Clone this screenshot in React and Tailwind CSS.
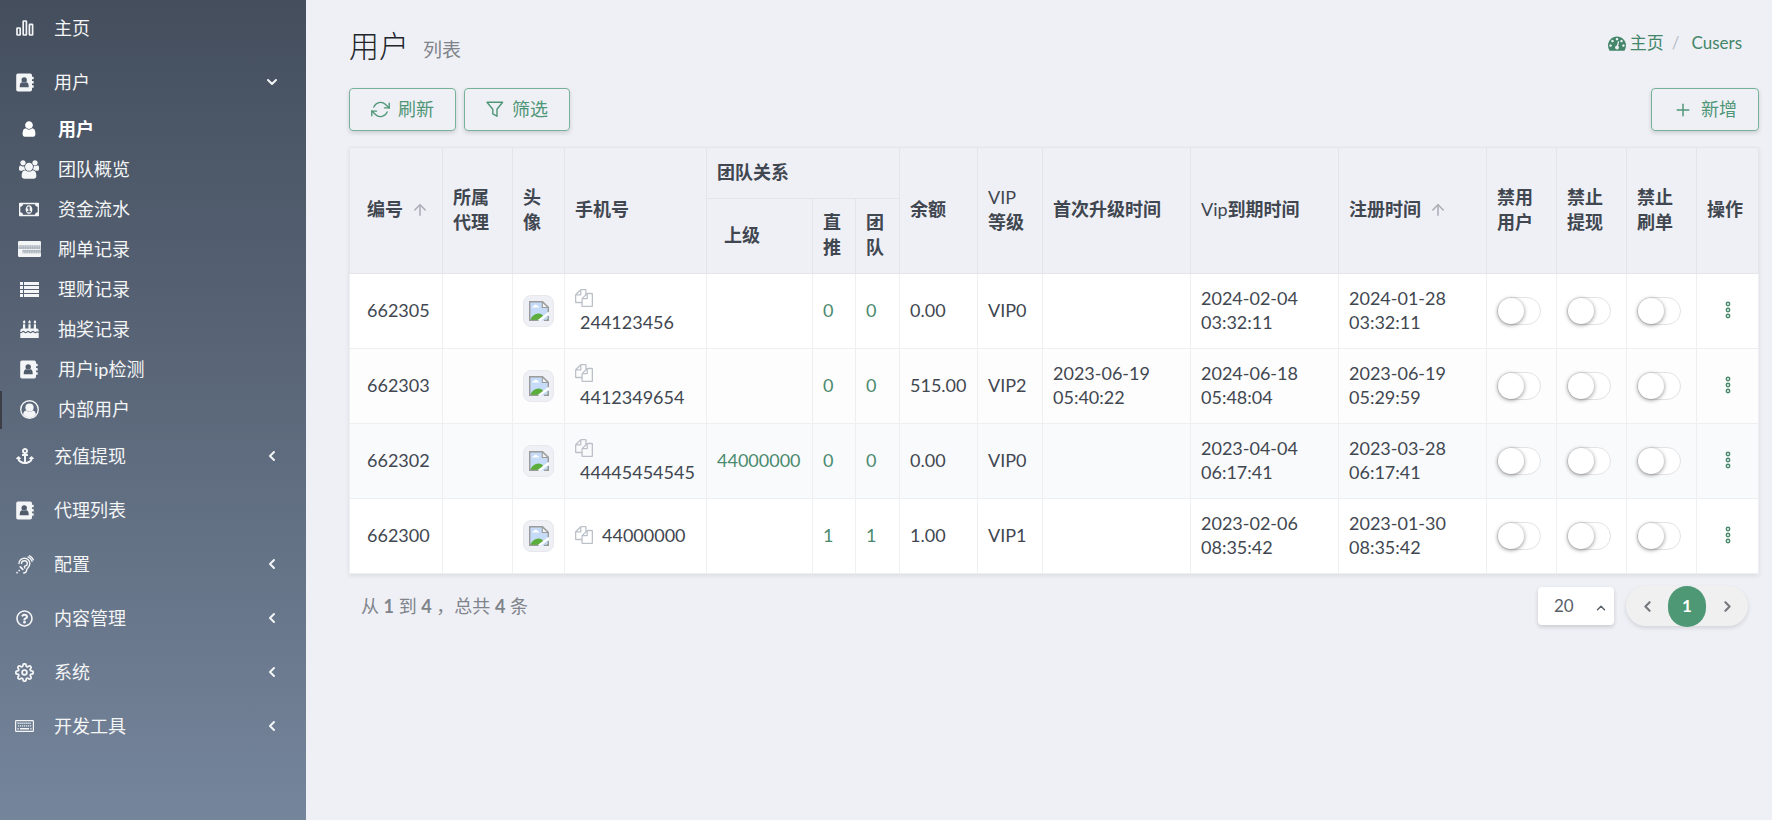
import { FaAnchor, FaRegQuestionCircle } from "react-icons/fa";
import {
  FiArrowUp,
  FiChevronDown,
  FiChevronLeft,
  FiChevronRight,
  FiChevronUp,
  FiPlus,
  FiRefreshCw,
  FiSettings,
} from "react-icons/fi";

const BarsIcon = () => (
  <svg viewBox="0 0 18 16" className="h-4 w-[18px]" fill="none" stroke="currentColor" strokeWidth="1.7" aria-hidden="true">
    <rect x="1" y="8" width="3.2" height="7" rx="0.6" />
    <rect x="7.2" y="1" width="3.2" height="14" rx="0.6" />
    <rect x="13.4" y="4.4" width="3.2" height="10.6" rx="0.6" />
  </svg>
);

const AddressBookIcon = () => (
  <svg viewBox="0 0 18 19" className="h-[19px] w-[18px]" aria-hidden="true">
    <path
      d="M2 0.500h12.200a1.800 1.800 0 0 1 1.800 1.800v1.500h1.200q.5 0 .5.5v1.500q0 .5-.5.5H16v1.700h1.200q.5 0 .5.5v1.500q0 .5-.5.5H16v1.700h1.200q.5 0 .5.5v1.500q0 .5-.5.5H16v2a1.800 1.800 0 0 1-1.800 1.800H2a1.800 1.800 0 0 1-1.800-1.800V2.300A1.800 1.800 0 0 1 2 0.500z"
      fill="currentColor"
    />
    <circle cx="8.200" cy="7" r="2.700" fill="#505c6c" />
    <path d="M4 14.300q-.3 0-.3-.6 0-4.200 2.500-4.400 2 1.500 4 0 2.500.2 2.500 4.400 0 .6-.4.6z" fill="#505c6c" />
  </svg>
);

const UserIcon = () => (
  <svg viewBox="0 0 1792 1792" className="size-[18px]" fill="currentColor" aria-hidden="true">
    <path d="M1536 1399q0 109-62.5 187t-150.5 78h-854q-88 0-150.5-78t-62.5-187q0-85 8.5-160.5t31.5-152 58.5-131 94-89 134.5-34.5q131 128 313 128t313-128q76 0 134.5 34.5t94 89 58.5 131 31.5 152 8.5 160.5zm-256-887q0 159-112.5 271.5t-271.5 112.5-271.5-112.5-112.5-271.5 112.5-271.5 271.5-112.5 271.5 112.5 112.5 271.5z" />
  </svg>
);

const UsersIcon = () => (
  <svg viewBox="0 0 1920 1792" className="h-[19px] w-5" fill="currentColor" aria-hidden="true">
    <path d="M593 896q-162 5-265 128h-134q-82 0-138-40.5t-56-118.5q0-353 124-353 6 0 43.5 21t97.5 42.5 119 21.5q67 0 133-23-5 37-5 66 0 159 92 289zm1071 637q0 120-73 189.5t-194 69.5h-874q-121 0-194-69.5t-73-189.5q0-53 3.5-103.5t14-109 26.5-108.5 43-97.5 62-81 85.5-53.5 111.5-20q10 0 43 21.5t73 48 107 48 135 21.5 135-21.5 107-48 73-48 43-21.5q61 0 111.5 20t85.5 53.5 62 81 43 97.5 26.5 108.5 14 109 3.5 103.5zm-1024-1277q0 106-75 181t-181 75-181-75-75-181 75-181 181-75 181 75 75 181zm704 384q0 159-112.5 271.5t-271.5 112.5-271.5-112.5-112.5-271.5 112.5-271.5 271.5-112.5 271.5 112.5 112.5 271.5zm576 225q0 78-56 118.5t-138 40.5h-134q-103-123-265-128 92-130 92-289 0-29-5-66 66 23 133 23 59 0 119-21.5t97.5-42.5 43.5-21q124 0 124 353zm-128-609q0 106-75 181t-181 75-181-75-75-181 75-181 181-75 181 75 75 181z" />
  </svg>
);

const MoneyIcon = () => (
  <svg viewBox="0 0 1920 1792" className="h-[19px] w-5" fill="currentColor" aria-hidden="true">
    <path d="M768 1152h384v-96h-128v-448h-114l-148 137 77 80q42-37 55-57h2v288h-128v96zm512-256q0 70-21 142t-59.5 134-101.5 101-138 39-138-39-101.5-101-59.5-134-21-142 21-142 59.5-134 101.5-101 138-39 138 39 101.5 101 59.5 134 21 142zm512 256v-512q-106 0-181-75t-75-181h-1152q0 106-75 181t-181 75v512q106 0 181 75t75 181h1152q0-106 75-181t181-75zm128-832v1152q0 26-19 45t-45 19h-1792q-26 0-45-19t-19-45v-1152q0-26 19-45t45-19h1792q26 0 45 19t19 45z" />
  </svg>
);

const CardIcon = () => (
  <svg viewBox="0 0 23 16" className="h-4 w-[23px]" aria-hidden="true">
    <rect width="23" height="16" rx="1.2" fill="currentColor" />
    <path d="M0.500 6.200h22" stroke="#a9b1bb" strokeWidth="3.600" />
    <path d="M4.500 10.600h18.500" stroke="#a9b1bb" strokeWidth="3.400" />
    <path d="M1 5.500h21.500M1.500 7h21" stroke="#e4e7ea" strokeWidth="0.700" strokeDasharray="1.300 1" />
    <path d="M5.500 10h17M5 11.500h17.500" stroke="#e4e7ea" strokeWidth="0.700" strokeDasharray="1.300 1" />
  </svg>
);

const ListIcon = () => (
  <svg viewBox="0 0 19 15" className="h-[15px] w-[19px]" fill="currentColor" aria-hidden="true">
    <path d="M0 0h3v3H0zM4 0h15v3H4zM0 4h3v3H0zM4 4h15v3H4zM0 8h3v3H0zM4 8h15v3H4zM0 12h3v3H0zM4 12h15v3H4z" />
  </svg>
);

const CakeIcon = () => (
  <svg viewBox="0 0 19 18" className="h-[18px] w-[19px]" aria-hidden="true">
    <path d="M3 4.200h2.200V9H3zM8.400 4.200h2.200V9H8.400zM13.800 4.200H16V9h-2.200z" fill="currentColor" />
    <path d="M4.200 0q1.200 1.400 1.200 2.300a1.200 1.200 0 0 1-2.500 0Q2.900 1.500 4.200 0zM9.600 0q1.200 1.400 1.200 2.300a1.200 1.200 0 0 1-2.500 0Q8.300 1.500 9.600 0zM15 0q1.200 1.400 1.200 2.300a1.200 1.200 0 0 1-2.500 0Q13.700 1.500 15 0z" fill="currentColor" />
    <path d="M0.300 18V10.500A2 2 0 0 1 2.300 8.600h14.400a2 2 0 0 1 2 1.900V18z" fill="currentColor" />
    <path d="M0 12.600q1.600 0 2.400-.8.900-.7 1.800 0 1.400 1.600 3 0 .9-.7 1.800 0 1.400 1.600 3 0 .9-.7 1.800 0 1.400 1.600 3 .2.900-.6 2.200.6" fill="none" stroke="#596677" strokeWidth="1.200" />
  </svg>
);

const UserCircleIcon = () => (
  <svg viewBox="0 0 18 18" className="size-[19px]" aria-hidden="true">
    <circle cx="9" cy="9" r="8.3" fill="none" stroke="currentColor" strokeWidth="1.3" />
    <circle cx="9" cy="7.2" r="3.9" fill="currentColor" />
    <path d="M2.9 13.6C3.3 11.4 4.4 10 6 9.9c1.8 1.6 4.2 1.6 6 0 1.6.1 2.7 1.5 3.1 3.700A8 8 0 0 1 9 17a8 8 0 0 1-6.100-3.400z" fill="currentColor" />
  </svg>
);

const ListeningIcon = () => (
  <svg viewBox="0 0 18 19" className="h-[19px] w-[18px]" fill="none" stroke="currentColor" strokeWidth="1.400" strokeLinecap="round" aria-hidden="true">
    <path d="M3 8.600a5.400 5.400 0 0 1 10.800 0c0 4.200-3 3.900-3.200 6.700-.1 1.800-1.200 2.700-2.900 2.700" />
    <path d="M5.500 8.600a2.900 2.900 0 0 1 5.800.2c0 1-.5 1.700-1.500 1.900-1.500.3-1.600 1.300-1 2.300" />
    <path d="M12 1.900a7.200 7.200 0 0 1 4.100 4.400" />
    <path d="M13.600 0.800a8 8 0 0 1 3.700 4" />
    <path d="M1 17.600h.1M3.100 15.500h.1M4.300 11.800l2.500 2.500" strokeWidth="1.700" />
  </svg>
);

const KeyboardIcon = () => (
  <svg viewBox="0 0 19 12" className="h-3 w-[19px]" fill="none" stroke="currentColor" aria-hidden="true">
    <rect x="0.600" y="0.600" width="17.800" height="10.800" rx="0.600" strokeWidth="1.200" />
    <path d="M2.500 3.200h14M3 5.900h13.500" strokeWidth="1.400" strokeDasharray="1.200 0.800" />
    <path d="M2.500 8.700h1.200M5 8.700h9M15.300 8.700h1.200" strokeWidth="1.400" />
  </svg>
);

const DashboardIcon = () => (
  <svg viewBox="0 0 1792 1792" className="size-[18px]" fill="currentColor" aria-hidden="true">
    <path d="M384 1152q0-53-37.5-90.5t-90.5-37.5-90.5 37.5-37.5 90.5 37.5 90.5 90.5 37.5 90.5-37.5 37.5-90.5zm192-448q0-53-37.5-90.5t-90.5-37.5-90.5 37.5-37.5 90.5 37.5 90.5 90.5 37.5 90.5-37.5 37.5-90.5zm428 481l101-382q6-26-7.5-48.5t-38.5-29.5-48 6.5-30 39.5l-101 382q-60 5-107 43.5t-63 98.5q-20 77 20 146t117 89 146-20 89-117q16-60-6-117t-72-91zm660-33q0-53-37.5-90.5t-90.5-37.5-90.5 37.5-37.5 90.5 37.5 90.5 90.5 37.5 90.5-37.5 37.5-90.5zm-640-640q0-53-37.5-90.5t-90.5-37.5-90.5 37.5-37.5 90.5 37.5 90.5 90.5 37.5 90.5-37.5 37.5-90.5zm448 192q0-53-37.5-90.5t-90.5-37.5-90.5 37.5-37.5 90.5 37.5 90.5 90.5 37.5 90.5-37.5 37.5-90.5zm320 448q0 261-141 483-19 29-54 29h-1402q-35 0-54-29-141-221-141-483 0-182 71-348t191-286 286-191 348-71 348 71 286 191 191 286 71 348z" />
  </svg>
);

const FunnelIcon = () => (
  <svg viewBox="0 0 18 17" className="h-[17px] w-[18px]" fill="none" stroke="currentColor" strokeWidth="1.400" strokeLinejoin="round" aria-hidden="true">
    <path d="M1 1.200h15.600L11 8.300v6.900l-4.200-2.300V8.300z" />
  </svg>
);

const CopyIcon = () => (
  <svg viewBox="0 0 1792 1792" className="size-[18px]" fill="currentColor" aria-hidden="true">
    <path d="M1696 384q40 0 68 28t28 68v1216q0 40-28 68t-68 28h-960q-40 0-68-28t-28-68v-288h-544q-40 0-68-28t-28-68v-672q0-40 20-88t48-76l408-408q28-28 76-48t88-20h416q40 0 68 28t28 68v328q68-40 128-40h416zm-544 213l-299 299h299v-299zm-640-384l-299 299h299v-299zm196 647l316-316v-416h-384v416q0 40-28 68t-68 28h-416v640h512v-256q0-40 20-88t48-76zm956 804v-1152h-384v416q0 40-28 68t-68 28h-416v640h896z" />
  </svg>
);

const MoreIcon = () => (
  <svg viewBox="0 0 6 18" className="h-[18px] w-[6px]" fill="none" stroke="currentColor" strokeWidth="1.500" aria-hidden="true">
    <circle cx="3" cy="3" r="1.700" />
    <circle cx="3" cy="9" r="1.700" />
    <circle cx="3" cy="15" r="1.700" />
  </svg>
);

const BrokenImage = () => (
  <svg viewBox="0 0 20 20" className="size-5" role="img" aria-label="头像">
    <path d="M0.500 0.500h13l6 5.500v13.500H0.500z" fill="#c5dbf7" />
    <path d="M3 6.500q0-1.500 1.800-1.500.6-1.600 2.300-1.300 1.500.2 1.600 1.600 1.500 0 1.500 1.200z" fill="#fff" />
    <path d="M1 19q3-6.500 8.500-6.500 3.500 0 5 3L11 19z" fill="#5bad3c" />
    <path d="M17.500 19l1.500-1.200V19z" fill="#5bad3c" />
    <path d="M12 19.600l8-6v-3l-12 9z" fill="#fff" />
    <path d="M9.500 19.500H0.700V0.700h12.800l5.800 5.600v5M19.300 15v4.500h-4.300" fill="none" stroke="#9b9b9b" strokeWidth="1.4" />
    <path d="M13.300 0.800v5.700h5.900z" fill="#f4f4f4" stroke="#9b9b9b" strokeWidth="1.100" />
  </svg>
);

const SUB_ITEMS = [
  { label: "用户", icon: <UserIcon />, active: true },
  { label: "团队概览", icon: <UsersIcon /> },
  { label: "资金流水", icon: <MoneyIcon /> },
  { label: "刷单记录", icon: <CardIcon /> },
  { label: "理财记录", icon: <ListIcon /> },
  { label: "抽奖记录", icon: <CakeIcon /> },
  { label: "用户ip检测", icon: <AddressBookIcon /> },
  { label: "内部用户", icon: <UserCircleIcon />, marked: true },
];

const MENU = [
  { label: "主页", icon: <BarsIcon /> },
  { label: "用户", icon: <AddressBookIcon />, children: SUB_ITEMS },
  { label: "充值提现", icon: <FaAnchor size={18} />, more: true },
  { label: "代理列表", icon: <AddressBookIcon /> },
  { label: "配置", icon: <ListeningIcon />, more: true },
  { label: "内容管理", icon: <FaRegQuestionCircle size={17} />, more: true },
  { label: "系统", icon: <FiSettings size={19} strokeWidth={2.25} />, more: true },
  { label: "开发工具", icon: <KeyboardIcon />, more: true },
];

const ROWS = [
  { id: "662305", phone: "244123456", parent: "", direct: "0", team: "0", balance: "0.00", vip: "VIP0", first: "", expire: "2024-02-04 03:32:11", joined: "2024-01-28 03:32:11", bg: "bg-white" },
  { id: "662303", phone: "4412349654", parent: "", direct: "0", team: "0", balance: "515.00", vip: "VIP2", first: "2023-06-19 05:40:22", expire: "2024-06-18 05:48:04", joined: "2023-06-19 05:29:59", bg: "bg-[#fdfdfd]" },
  { id: "662302", phone: "44445454545", parent: "44000000", direct: "0", team: "0", balance: "0.00", vip: "VIP0", first: "", expire: "2023-04-04 06:17:41", joined: "2023-03-28 06:17:41", bg: "bg-[#f9fafc]" },
  { id: "662300", phone: "44000000", parent: "", direct: "1", team: "1", balance: "1.00", vip: "VIP1", first: "", expire: "2023-02-06 08:35:42", joined: "2023-01-30 08:35:42", bg: "bg-white" },
];

const TOGGLES = ["禁用用户", "禁止提现", "禁止刷单"];

const TH = "border border-[#e4e5e9] px-[10px] pb-[2px] text-left font-bold leading-[25px]";
const TH_INDENTED = "border border-[#e4e5e9] pl-[17px] pb-[2px] text-left font-bold leading-[25px]";
const TD = "border border-[#eeeff1] px-[10px] pb-[2px] leading-6";
const TD_CENTERED = "border border-[#eeeff1] px-[10px] leading-6";
const OUTLINE_BUTTON =
  "flex h-[43px] items-center gap-2 rounded border border-[#78b098] px-[21px] text-[#4f9677] shadow-[0_2px_4px_rgba(0,0,0,0.14)]";

function Sidebar() {
  return (
    <nav aria-label="主菜单" className="w-[306px] shrink-0 bg-linear-to-b from-[#444e5d] to-[#75859b] pt-px text-[18px] text-[#f4f5f6]">
      <ul>
        {MENU.map((item) => (
          <li key={item.label}>
            <a href="#" className="flex h-[54px] items-center pr-[26px]">
              <span className="flex w-[49px] justify-center">{item.icon}</span>
              <span className="flex-1 pl-[5px]">{item.label}</span>
              {item.children && <FiChevronDown size={16} strokeWidth={3} />}
              {item.more && <FiChevronLeft size={16} strokeWidth={3} />}
            </a>
            {item.children && (
              <ul>
                {item.children.map((sub) => (
                  <li key={sub.label} className="relative">
                    {sub.marked && <span className="absolute top-[2px] left-0 h-[38px] w-[2px] bg-[#3b3f45]" />}
                    <a href="#" className={sub.active ? "flex h-10 items-center font-bold text-white" : "flex h-10 items-center"}>
                      <span className="flex w-[58px] justify-center">{sub.icon}</span>
                      <span>{sub.label}</span>
                    </a>
                  </li>
                ))}
              </ul>
            )}
          </li>
        ))}
      </ul>
    </nav>
  );
}

function Toggle({ label }) {
  return (
    <input
      type="checkbox"
      role="switch"
      aria-label={label}
      className="block h-7 w-11 appearance-none rounded-full border border-[#e3e3e5] bg-white before:block before:size-[26px] before:rounded-full before:bg-white before:shadow-[0_1px_4px_rgba(0,0,0,0.45)] checked:bg-[#4e9876] checked:before:translate-x-4"
    />
  );
}

function UserTable() {
  return (
    <table className="w-full table-fixed border-collapse text-[18px] text-[#414750] shadow-[0_2px_5px_rgba(0,0,0,0.08)]">
      <colgroup>
        <col className="w-[93px]" />
        <col className="w-[70px]" />
        <col className="w-[52px]" />
        <col className="w-[142px]" />
        <col className="w-[106px]" />
        <col className="w-[43px]" />
        <col className="w-[44px]" />
        <col className="w-[78px]" />
        <col className="w-[65px]" />
        <col className="w-[148px]" />
        <col className="w-[148px]" />
        <col className="w-[148px]" />
        <col className="w-[70px]" />
        <col className="w-[70px]" />
        <col className="w-[70px]" />
        <col />
      </colgroup>
      <thead>
        <tr className="h-[51px]">
          <th rowSpan={2} className={TH_INDENTED}>
            <span className="flex items-center gap-2">
              编号
              <FiArrowUp size={18} className="text-[#a9adb4]" />
            </span>
          </th>
          <th rowSpan={2} className={TH}>所属<br />代理</th>
          <th rowSpan={2} className={TH}>头<br />像</th>
          <th rowSpan={2} className={TH}>手机号</th>
          <th colSpan={3} className={TH}>团队关系</th>
          <th rowSpan={2} className={TH}>余额</th>
          <th rowSpan={2} className={TH}><span className="font-normal">VIP</span><br />等级</th>
          <th rowSpan={2} className={TH}>首次升级时间</th>
          <th rowSpan={2} className={TH}><span className="font-normal">Vip</span>到期时间</th>
          <th rowSpan={2} className={TH}>
            <span className="flex items-center gap-2">
              注册时间
              <FiArrowUp size={18} className="text-[#a9adb4]" />
            </span>
          </th>
          <th rowSpan={2} className={TH}>禁用<br />用户</th>
          <th rowSpan={2} className={TH}>禁止<br />提现</th>
          <th rowSpan={2} className={TH}>禁止<br />刷单</th>
          <th rowSpan={2} className={TH}>操作</th>
        </tr>
        <tr className="h-[75px]">
          <th className={TH_INDENTED}>上级</th>
          <th className={TH}>直<br />推</th>
          <th className={TH}>团<br />队</th>
        </tr>
      </thead>
      <tbody>
        {ROWS.map((row) => (
          <tr key={row.id} className={`h-[75px] ${row.bg}`}>
            <td className="border border-[#eeeff1] pb-[2px] pl-[17px]">{row.id}</td>
            <td className={TD} />
            <td className={TD_CENTERED}>
              <span className="flex h-8 w-[31px] items-center justify-center rounded-lg border border-[#e6e8ec] bg-[#eff0f6]">
                <BrokenImage />
              </span>
            </td>
            <td className={TD}>
              <span className="flex flex-wrap items-center">
                <button type="button" aria-label="复制" className="mr-1 flex h-6 items-center text-[#bcc1c9]"><CopyIcon /></button>
                <span className="pr-1 pl-[5px]">{row.phone}</span>
              </span>
            </td>
            <td className={TD}>{row.parent && <a href="#" className="text-[#4a8a6e]">{row.parent}</a>}</td>
            <td className={TD}><a href="#" className="text-[#4a8a6e]">{row.direct}</a></td>
            <td className={TD}><a href="#" className="text-[#4a8a6e]">{row.team}</a></td>
            <td className={TD}>{row.balance}</td>
            <td className={TD}>{row.vip}</td>
            <td className={TD}><span className="block w-[110px]">{row.first}</span></td>
            <td className={TD}><span className="block w-[110px]">{row.expire}</span></td>
            <td className={TD}><span className="block w-[110px]">{row.joined}</span></td>
            {TOGGLES.map((label) => (
              <td key={label} className={TD_CENTERED}><Toggle label={`${label} ${row.id}`} /></td>
            ))}
            <td className={TD}>
              <button type="button" aria-label="操作" className="flex w-full justify-center text-[#4a8a6e]">
                <MoreIcon />
              </button>
            </td>
          </tr>
        ))}
      </tbody>
    </table>
  );
}

export default function App() {
  return (
    <div className="flex min-h-screen bg-[#eff0f6] font-['Lato','Noto_Sans_CJK_SC',sans-serif]">
      <Sidebar />
      <main className="min-w-0 flex-1 pr-[13px] pl-[43px]">
        <header className="flex h-[88px] items-start justify-between pr-[17px]">
          <h1 className="flex items-baseline gap-[14px] pt-6 text-[30px] leading-[43px] font-light text-[#22262b]">
            用户
            <small className="text-[19px] font-normal text-[#7f838a]">列表</small>
          </h1>
          <nav aria-label="面包屑" className="flex items-center pt-[30px] text-[17px] leading-[26px] text-[#438669]">
            <a href="#" className="flex items-center gap-1"><DashboardIcon />主页</a>
            <span className="px-2 text-[#b8bec8]">/</span>
            <a href="#" className="pl-1">Cusers</a>
          </nav>
        </header>
        <div className="flex h-[59px] items-start gap-2 text-[18px]">
          <button type="button" className={OUTLINE_BUTTON}><FiRefreshCw size={19} strokeWidth={1.75} />刷新</button>
          <button type="button" className={OUTLINE_BUTTON}><FunnelIcon />筛选</button>
          <button type="button" className={`${OUTLINE_BUTTON} ml-auto`}><FiPlus size={20} strokeWidth={1.75} />新增</button>
        </div>
        <UserTable />
        <footer className="flex items-center justify-between pt-3 pr-[11px] pl-3">
          <p className="text-[18px] text-[#7f848b]">
            从 <b className="font-bold">1</b> 到 <b className="font-bold">4</b> ，总共 <b className="font-bold">4</b> 条
          </p>
          <div className="flex items-center gap-3">
            <div className="relative text-[#5a6068]">
              <select aria-label="每页条数" defaultValue="20" className="h-[38px] w-[76px] appearance-none rounded bg-white pl-4 text-[17px] shadow-[0_2px_4px_rgba(0,0,0,0.16)]">
                <option>20</option>
              </select>
              <FiChevronUp size={14} strokeWidth={2.5} className="pointer-events-none absolute top-[14px] right-[6px]" />
            </div>
            <nav aria-label="分页" className="flex h-10 items-center rounded-full bg-[#f0f0f0] text-[#75787d] shadow-[0_2px_4px_rgba(0,0,0,0.12)]">
              <button type="button" aria-label="上一页" className="flex w-[42px] justify-center"><FiChevronLeft size={17} strokeWidth={3} /></button>
              <button type="button" aria-current="page" className="h-[41px] w-[38px] rounded-[19px] bg-[#4e9876] text-[17px] font-bold text-white">1</button>
              <button type="button" aria-label="下一页" className="flex w-[42px] justify-center"><FiChevronRight size={17} strokeWidth={3} /></button>
            </nav>
          </div>
        </footer>
      </main>
    </div>
  );
}
